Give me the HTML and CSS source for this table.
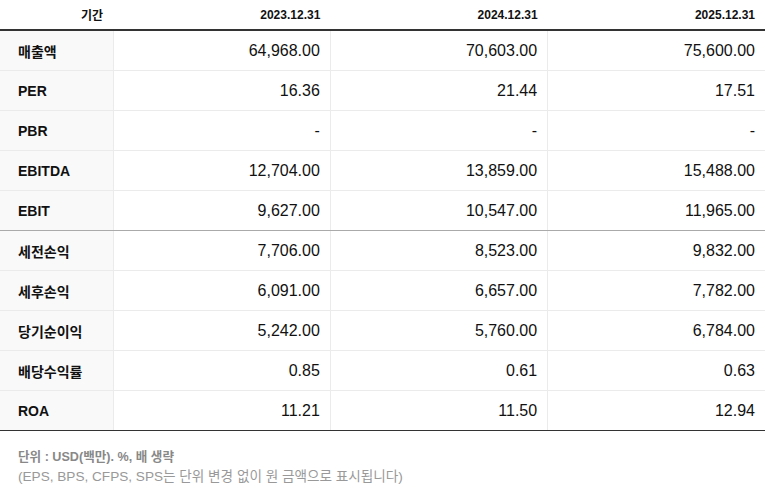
FILE: index.html
```html
<!DOCTYPE html>
<html lang="ko">
<head>
<meta charset="utf-8">
<link rel="stylesheet" href="styles.css">
</head>
<body>
<div class="wrap">
<table class="fin">
  <colgroup>
    <col class="c-label"><col class="c-val"><col class="c-val"><col class="c-val">
  </colgroup>
  <thead>
    <tr><th>기간</th><th>2023.12.31</th><th>2024.12.31</th><th>2025.12.31</th></tr>
  </thead>
  <tbody>
    <tr><th>매출액</th><td>64,968.00</td><td>70,603.00</td><td>75,600.00</td></tr>
    <tr><th>PER</th><td>16.36</td><td>21.44</td><td>17.51</td></tr>
    <tr><th>PBR</th><td>-</td><td>-</td><td>-</td></tr>
    <tr><th>EBITDA</th><td>12,704.00</td><td>13,859.00</td><td>15,488.00</td></tr>
    <tr class="sep"><th>EBIT</th><td>9,627.00</td><td>10,547.00</td><td>11,965.00</td></tr>
    <tr><th>세전손익</th><td>7,706.00</td><td>8,523.00</td><td>9,832.00</td></tr>
    <tr><th>세후손익</th><td>6,091.00</td><td>6,657.00</td><td>7,782.00</td></tr>
    <tr><th>당기순이익</th><td>5,242.00</td><td>5,760.00</td><td>6,784.00</td></tr>
    <tr><th>배당수익률</th><td>0.85</td><td>0.61</td><td>0.63</td></tr>
    <tr class="last"><th>ROA</th><td>11.21</td><td>11.50</td><td>12.94</td></tr>
  </tbody>
</table>
<div class="note">
  <p class="unit">단위 : USD(백만). %, 배 생략</p>
  <p class="desc">(EPS, BPS, CFPS, SPS는 단위 변경 없이 원 금액으로 표시됩니다)</p>
</div>
</div>
</body>
</html>
```

FILE: styles.css
```css
html, body {
  margin: 0;
  padding: 0;
  background: #fff;
}
body {
  font-family: "Liberation Sans", Arial, "Noto Sans CJK KR", sans-serif;
  color: #222;
}
.wrap {
  width: 765px;
}
.fin {
  width: 765px;
  border-collapse: collapse;
  table-layout: fixed;
}
.c-label { width: 113px; }
.fin thead th {
  height: 29px;
  padding: 0 10px 0 0;
  font-size: 12px;
  font-weight: bold;
  text-align: right;
  color: #111;
  border-bottom: 2px solid #333;
  vertical-align: middle;
}
.fin tbody th {
  height: 39px;
  padding: 0 0 0 18px;
  text-align: left;
  font-size: 14px;
  font-weight: bold;
  color: #111;
  background: #f9f9f9;
  border-bottom: 1px solid #ebebeb;
  border-right: 1px solid #ebebeb;
}
.fin tbody td {
  height: 39px;
  padding: 0 10px 0 0;
  text-align: right;
  font-size: 16px;
  color: #111;
  border-bottom: 1px solid #ebebeb;
  border-right: 1px solid #ebebeb;
}
.fin tbody td:last-child { border-right: none; }
.fin tbody tr.sep th,
.fin tbody tr.sep td { border-bottom: 1px solid #aaa; }
.fin tbody tr.last th,
.fin tbody tr.last td { border-bottom: 1px solid #333; }
.note {
  padding: 17px 0 0 18px;
  color: #888;
  font-size: 13px;
  line-height: 19px;
}
.note p { margin: 0; }
.note .unit { font-weight: bold; font-size: 12.6px; }
.note .desc { color: #999; font-size: 13.6px; }
```
